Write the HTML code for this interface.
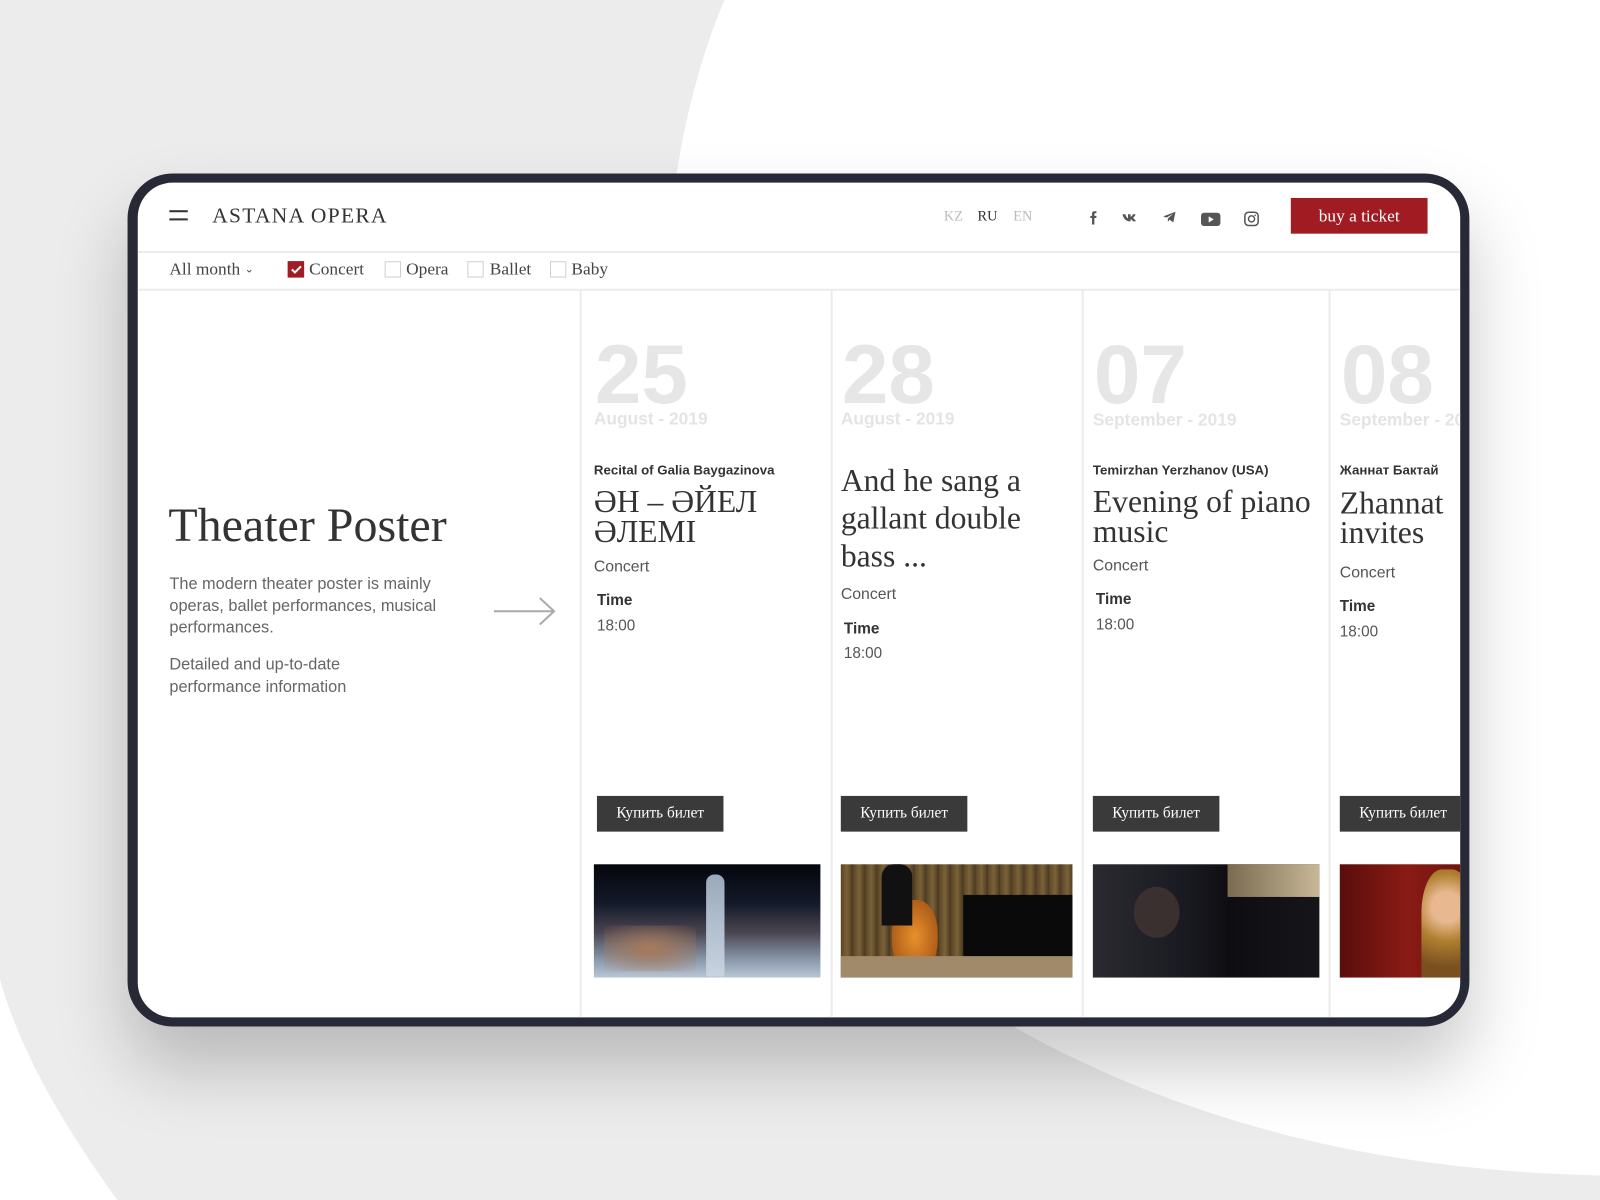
<!DOCTYPE html>
<html><head><meta charset="utf-8">
<style>
html,body{margin:0;padding:0;width:1600px;height:1200px;overflow:hidden;background:#fff}
#w{position:absolute;left:0;top:0;width:1568px;height:1176px;transform:scale(1.020408);transform-origin:0 0}
.a{position:absolute;white-space:nowrap}
.serif{font-family:"Liberation Serif","DejaVu Serif",serif}
.sans{font-family:"Liberation Sans","DejaVu Sans",sans-serif}
#frame{position:absolute;left:125px;top:170px;width:1315px;height:836px;border-radius:44px;background:#272a36;box-shadow:0 40px 70px rgba(0,0,0,.22)}
#in{position:absolute;left:135px;top:179px;width:1296px;height:818px;border-radius:34px 34px 34px 34px;background:#fff;overflow:hidden}
.hl{position:absolute;left:0;width:1296px;height:2px;background:#ececec}
.vl{position:absolute;top:105px;bottom:0;width:2px;background:#ececec}
.cb{position:absolute;width:16px;height:16px;border:1px solid #d0d0d0;box-sizing:border-box;top:77px}
.lbl{font-size:17px;color:#444;line-height:20px;top:75px}
.date{font-size:82px;font-weight:bold;color:#e6e6e6;line-height:82px}
.mon{font-size:17px;font-weight:bold;color:#e4e4e4;line-height:20px}
.sub{font-size:13px;font-weight:bold;color:#333;line-height:16px}
.tt{font-size:31px;color:#333;line-height:29px}
.cat{font-size:15.5px;color:#555;line-height:18px}
.tm{font-size:15px;font-weight:bold;color:#333;line-height:18px}
.hr{font-size:15px;color:#555;line-height:18px}
.btn{position:absolute;top:601px;width:124px;height:35px;background:#3a3a3a;color:#fff;font-size:15px;line-height:35px;text-align:center}
.img{position:absolute;top:668px;height:111px}
</style></head><body>
<div id="w">
<svg class="a" style="left:0;top:0" width="1568" height="1176" viewBox="0 0 1568 1176">
<rect width="1568" height="1176" fill="#fff"/>
<path d="M0,0 L710,0 C600,260 620,760 1000,1010 C1200,1120 1400,1148 1568,1152 L1568,1176 L115,1176 C60,1100 20,1030 0,960 Z" fill="#ececec"/>
</svg>
<div id="frame"></div>
<div id="in">
 <div class="a" style="left:31px;top:27px;width:18px;height:2px;background:#333"></div>
 <div class="a" style="left:31px;top:35px;width:18px;height:2px;background:#333"></div>
 <div class="a serif" style="left:73px;top:20px;font-size:21px;line-height:24px;letter-spacing:1.3px;color:#333">ASTANA OPERA</div>
 <div class="a serif" style="left:790px;top:26px;font-size:14px;line-height:16px;color:#bbb">KZ</div>
 <div class="a serif" style="left:823px;top:26px;font-size:14px;line-height:16px;color:#333">RU</div>
 <div class="a serif" style="left:858px;top:26px;font-size:14px;line-height:16px;color:#bbb">EN</div>
 <svg class="a" style="left:928px;top:25px" width="180" height="20" viewBox="0 0 180 20">
  <path d="M11.5,3 h-2 c-1.6,0 -2.3,1 -2.3,2.5 v2 h-1.7 v2.2 h1.7 v6.3 h2.3 v-6.3 h1.8 l0.3,-2.2 h-2.1 v-1.6 c0,-0.6 0.2,-0.9 0.9,-0.9 h1.1 z" fill="#555"/>
  <path d="M37,6 h2.8 c0.8,2.4 2,4 2.6,4 v-4 h2.6 v2.5 c0.8,-0.2 1.8,-1.3 2.3,-2.5 h2.6 c-0.4,1.6 -1.7,2.9 -2.6,3.6 c1,0.5 2.3,1.8 2.9,3.4 h-2.9 c-0.5,-1.1 -1.4,-2 -2.3,-2.1 v2.1 h-0.6 c-3.7,0 -6.5,-2.6 -7.4,-7 z" fill="#555"/>
  <path d="M77,8 l12,-4.5 l-2.2,10.5 l-3.5,-2.7 l-1.8,2 l0,-3 l5,-4.8 l-6.3,3.8 z" fill="#555"/>
  <rect x="114" y="4.5" width="19" height="13" rx="3" fill="#555"/><path d="M121.5,8 v6 l5,-3 z" fill="#fff"/>
  <rect x="157" y="4" width="13" height="13" rx="3.5" fill="none" stroke="#555" stroke-width="1.5"/><circle cx="163.5" cy="10.5" r="3" fill="none" stroke="#555" stroke-width="1.4"/><circle cx="167" cy="7" r=".8" fill="#555"/>
 </svg>
 <div class="a serif" style="left:1130px;top:15px;width:134px;height:35px;background:#a01c22;color:#fff;font-size:17px;line-height:35px;text-align:center">buy a ticket</div>
 <div class="hl" style="top:67px"></div>
 <div class="a serif lbl" style="left:31px">All month <span style="font-size:11px;position:relative;top:-2px">&#8964;</span></div>
 <div class="cb" style="left:147px;background:#a01c22;border-color:#a01c22"><svg width="16" height="16" style="position:absolute;left:-1px;top:-1px"><path d="M4,8 l3,3 l6,-6" stroke="#fff" stroke-width="2" fill="none"/></svg></div>
 <div class="a serif lbl" style="left:168px">Concert</div>
 <div class="cb" style="left:242px"></div><div class="a serif lbl" style="left:263px">Opera</div>
 <div class="cb" style="left:323px"></div><div class="a serif lbl" style="left:345px">Ballet</div>
 <div class="cb" style="left:404px"></div><div class="a serif lbl" style="left:425px">Baby</div>
 <div class="hl" style="top:104px"></div>
 <div class="vl" style="left:433px"></div><div class="vl" style="left:679px"></div><div class="vl" style="left:925px"></div><div class="vl" style="left:1167px"></div>

 <div class="a serif" style="left:30px;top:309px;font-size:47px;line-height:54px;color:#333">Theater Poster</div>
 <div class="a sans" style="left:31px;top:383px;font-size:16px;line-height:21.5px;color:#666">The modern theater poster is mainly<br>operas, ballet performances, musical<br>performances.</div>
 <div class="a sans" style="left:31px;top:462px;font-size:16px;line-height:21.5px;color:#666">Detailed and up-to-date<br>performance information</div>
 <svg class="a" style="left:348px;top:405px" width="64" height="30"><path d="M1,15 H60 M46,2 L60,15 L46,28" stroke="#aaa" stroke-width="2" fill="none"/></svg>

 <!-- col1 -->
 <div class="a sans date" style="left:448px;top:148px">25</div>
 <div class="a sans mon" style="left:447px;top:222px">August - 2019</div>
 <div class="a sans sub" style="left:447px;top:274px">Recital of Galia Baygazinova</div>
 <div class="a serif tt" style="left:447px;top:298px">ӘН – ӘЙЕЛ<br>ӘЛЕМІ</div>
 <div class="a sans cat" style="left:447px;top:368px">Concert</div>
 <div class="a sans tm" style="left:450px;top:401px">Time</div>
 <div class="a sans hr" style="left:450px;top:426px">18:00</div>
 <div class="btn serif" style="left:450px">Купить билет</div>
 <div class="img" style="left:447px;width:222px;background:linear-gradient(180deg,#05060c 0%,#141a2a 35%,#4a4550 60%,#8c9aae 85%,#b8c6d4 100%)"><div style="position:absolute;left:110px;top:10px;width:18px;height:100px;background:linear-gradient(#9ab,#c9d3e0);border-radius:8px 8px 2px 2px"></div><div style="position:absolute;left:10px;top:60px;width:90px;height:45px;background:radial-gradient(#a77a5a,rgba(120,80,60,0));"></div></div>

 <!-- col2 -->
 <div class="a sans date" style="left:690px;top:148px">28</div>
 <div class="a sans mon" style="left:689px;top:222px">August - 2019</div>
 <div class="a serif tt" style="left:689px;top:273px;line-height:37px">And he sang a<br>gallant double<br>bass ...</div>
 <div class="a sans cat" style="left:689px;top:395px">Concert</div>
 <div class="a sans tm" style="left:692px;top:429px">Time</div>
 <div class="a sans hr" style="left:692px;top:453px">18:00</div>
 <div class="btn serif" style="left:689px">Купить билет</div>
 <div class="img" style="left:689px;width:227px;background:repeating-linear-gradient(90deg,#5a4526 0,#7a6238 6px,#4a3820 12px)"><div style="position:absolute;left:120px;top:30px;width:107px;height:70px;background:#0a0a0a"></div><div style="position:absolute;left:50px;top:35px;width:45px;height:72px;border-radius:45%;background:radial-gradient(#e8902e,#9a4a10)"></div><div style="position:absolute;left:40px;top:0;width:30px;height:60px;background:#111;border-radius:12px 12px 0 0"></div><div style="position:absolute;left:0;top:90px;width:227px;height:21px;background:#a08a6a"></div></div>

 <!-- col3 -->
 <div class="a sans date" style="left:937px;top:148px">07</div>
 <div class="a sans mon" style="left:936px;top:223px">September - 2019</div>
 <div class="a sans sub" style="left:936px;top:274px">Temirzhan Yerzhanov (USA)</div>
 <div class="a serif tt" style="left:936px;top:298px">Evening of piano<br>music</div>
 <div class="a sans cat" style="left:936px;top:367px">Concert</div>
 <div class="a sans tm" style="left:939px;top:400px">Time</div>
 <div class="a sans hr" style="left:939px;top:425px">18:00</div>
 <div class="btn serif" style="left:936px">Купить билет</div>
 <div class="img" style="left:936px;width:222px;background:linear-gradient(90deg,#2a2a30 0%,#1a1a22 40%,#0e0e12 60%,#15151a 100%)"><div style="position:absolute;right:0;top:0;width:90px;height:32px;background:linear-gradient(90deg,#7a6a50,#c8b898)"></div><div style="position:absolute;left:40px;top:22px;width:45px;height:50px;border-radius:50%;background:#3a3030"></div></div>

 <!-- col4 -->
 <div class="a sans date" style="left:1179px;top:148px">08</div>
 <div class="a sans mon" style="left:1178px;top:223px">September - 2019</div>
 <div class="a sans sub" style="left:1178px;top:274px">Жаннат Бактай</div>
 <div class="a serif tt" style="left:1178px;top:299px">Zhannat<br>invites</div>
 <div class="a sans cat" style="left:1178px;top:374px">Concert</div>
 <div class="a sans tm" style="left:1178px;top:407px">Time</div>
 <div class="a sans hr" style="left:1178px;top:432px">18:00</div>
 <div class="btn serif" style="left:1178px">Купить билет</div>
 <div class="img" style="left:1178px;width:130px;background:linear-gradient(90deg,#5a0e0c,#8a1a14 50%,#6a1410)"><div style="position:absolute;left:80px;top:5px;width:50px;height:106px;border-radius:40% 40% 0 0;background:radial-gradient(circle at 50% 35%,#e8b890 20%,#b08030 45%,#7a5020 80%)"></div></div>
</div>
</div>
</body></html>
